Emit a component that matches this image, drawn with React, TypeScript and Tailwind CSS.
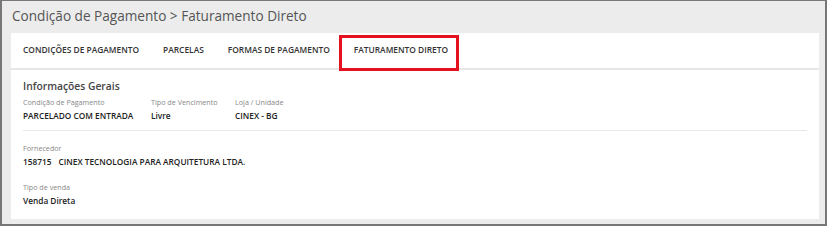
import React from 'react';

const tabs = ['CONDIÇÕES DE PAGAMENTO', 'PARCELAS', 'FORMAS DE PAGAMENTO', 'FATURAMENTO DIRETO'];

const Field: React.FC<{ label: string; value: React.ReactNode; className?: string }> = ({ label, value, className }) => (
  <div className={className}>
    <div className="text-[7.2px] leading-[12px] text-[#888]">{label}</div>
    <div className="mt-[1px] text-[8.3px] leading-[13px] font-semibold text-[#222]">{value}</div>
  </div>
);

const App: React.FC = () => {
  return (
    <div
      className="w-[827px] h-[226px] bg-[#ececec] border-2 border-t border-[#777] overflow-hidden"
      style={{ fontFamily: '"Open Sans", "Liberation Sans", sans-serif' }}
    >
      {/* Breadcrumb title */}
      <div className="h-[32px] pl-[10px] pt-[4px] text-[13.6px] leading-[22px] text-[#555]">
        Condição de Pagamento &gt; Faturamento Direto
      </div>

      {/* Card */}
      <div className="ml-[9px] mr-[6px] h-[186px] bg-white">
        {/* Tabs */}
        <div className="flex h-[37px] px-[12px] border-b-2 border-[#e6e6e6]">
          {tabs.map((tab, i) => (
            <div key={tab} className="relative flex items-center px-[12px] first:pl-0">
              <span className="text-[8.4px] font-semibold text-[#333]">{tab}</span>
              {i === tabs.length - 1 && (
                <div className="absolute left-[-3px] right-[1px] top-[2px] bottom-[-3px] border-[3px] border-[#e4111f]" />
              )}
            </div>
          ))}
        </div>

        {/* Informações Gerais */}
        <div className="px-[12px] pt-[8px]">
          <div className="text-[10.3px] leading-[16px] font-semibold text-[#444]">Informações Gerais</div>
          <div className="mt-[2px] flex">
            <Field className="w-[128px]" label="Condição de Pagamento" value="PARCELADO COM ENTRADA" />
            <Field className="w-[84px]" label="Tipo de Vencimento" value="Livre" />
            <Field label="Loja / Unidade" value="CINEX - BG" />
          </div>
          <div className="mt-[8px] h-px bg-[#e8e8e8]" />
          <Field
            className="mt-[11px]"
            label="Fornecedor"
            value={
              <span className="flex gap-[7px]">
                <span>158715</span>
                <span>CINEX TECNOLOGIA PARA ARQUITETURA LTDA.</span>
              </span>
            }
          />
          <Field className="mt-[13px]" label="Tipo de venda" value="Venda Direta" />
        </div>
      </div>
    </div>
  );
};

export default App;
